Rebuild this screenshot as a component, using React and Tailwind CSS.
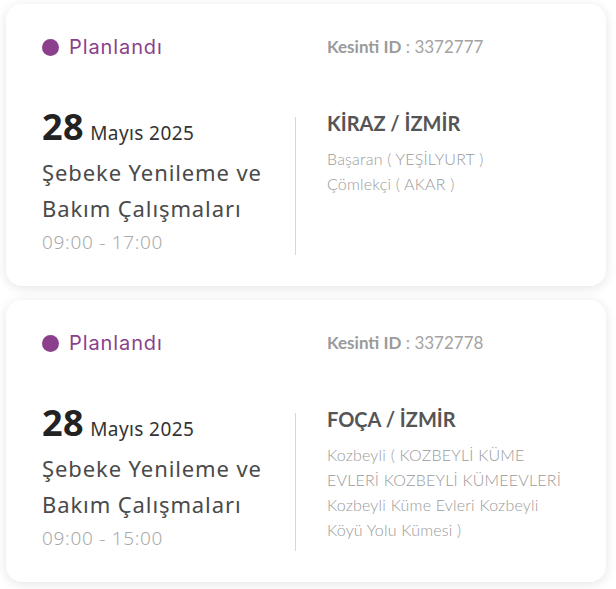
import React from 'react';

const outages = [
  {
    id: '3372777',
    day: '28',
    month: 'Mayıs 2025',
    hours: '09:00 - 17:00',
    place: 'KİRAZ / İZMİR',
    areas: ['Başaran ( YEŞİLYURT )', 'Çömlekçi ( AKAR )'],
  },
  {
    id: '3372778',
    day: '28',
    month: 'Mayıs 2025',
    hours: '09:00 - 15:00',
    place: 'FOÇA / İZMİR',
    areas: [
      'Kozbeyli ( KOZBEYLİ KÜME EVLERİ KOZBEYLİ KÜMEEVLERİ Kozbeyli Küme Evleri Kozbeyli Köyü Yolu Kümesi )',
    ],
  },
];

const OutageCard = ({ item }) => {
  return (
    <div className="rounded-2xl bg-white px-[36px] pt-[29px] pb-[31px] shadow-[0_2px_12px_rgba(0,0,0,0.11)]">
      {/* === Status + ID === */}
      <div className="flex h-[28px] items-center">
        <div className="flex w-[254px] items-center gap-[10px]">
          <span className="h-[17px] w-[17px] rounded-full bg-[#8b3f8d]"></span>
          <span className="font-['Inter',sans-serif] text-[20px] tracking-[0.9px] text-[#8b3f8d]">Planlandı</span>
        </div>
        <div className="pl-[31px] font-['Lato',sans-serif] text-[17px] text-[#a3a3a3]">
          <span className="font-bold text-[#9a9a9a]">Kesinti ID</span> : {item.id}
        </div>
      </div>

      {/* === Date / place === */}
      <div className="mt-[56px] flex h-[138px]">
        <div className="w-[254px] border-r border-[#d6d6d6] font-['Noto_Sans',sans-serif]">
          <div className="-mt-[8px] flex items-baseline gap-[6px] leading-[36px]">
            <span className="text-[36px] font-bold tracking-[0.5px] text-[#222]">{item.day}</span>
            <span className="text-[19px] leading-none tracking-[0.4px] text-[#333]">{item.month}</span>
          </div>
          <p className="mt-[9px] text-[22px] leading-[36px] tracking-[0.9px] text-[#4a4a4a]">
            Şebeke Yenileme ve Bakım Çalışmaları
          </p>
          <p className="text-[19px] font-light leading-[32px] tracking-[0.7px] text-[#aaa]">{item.hours}</p>
        </div>
        <div className="flex-1 pl-[31px] font-['Lato',sans-serif]">
          <p className="-mt-[9px] text-[20px] font-bold leading-[30px] text-[#555]">{item.place}</p>
          <div className="mt-[8px] text-[16px] font-light leading-[25px] tracking-[0.2px] text-[#9a9a9a]">
            {item.areas.map((a) => (
              <p key={a}>{a}</p>
            ))}
          </div>
        </div>
      </div>
    </div>
  );
};

const App = () => {
  return (
    <div className="min-h-screen w-[612px] bg-white px-[6px] pt-[4px] pb-[8px]">
      <div className="flex flex-col gap-[14px]">
        {outages.map((o) => (
          <OutageCard key={o.id} item={o} />
        ))}
      </div>
    </div>
  );
};

export default App;
